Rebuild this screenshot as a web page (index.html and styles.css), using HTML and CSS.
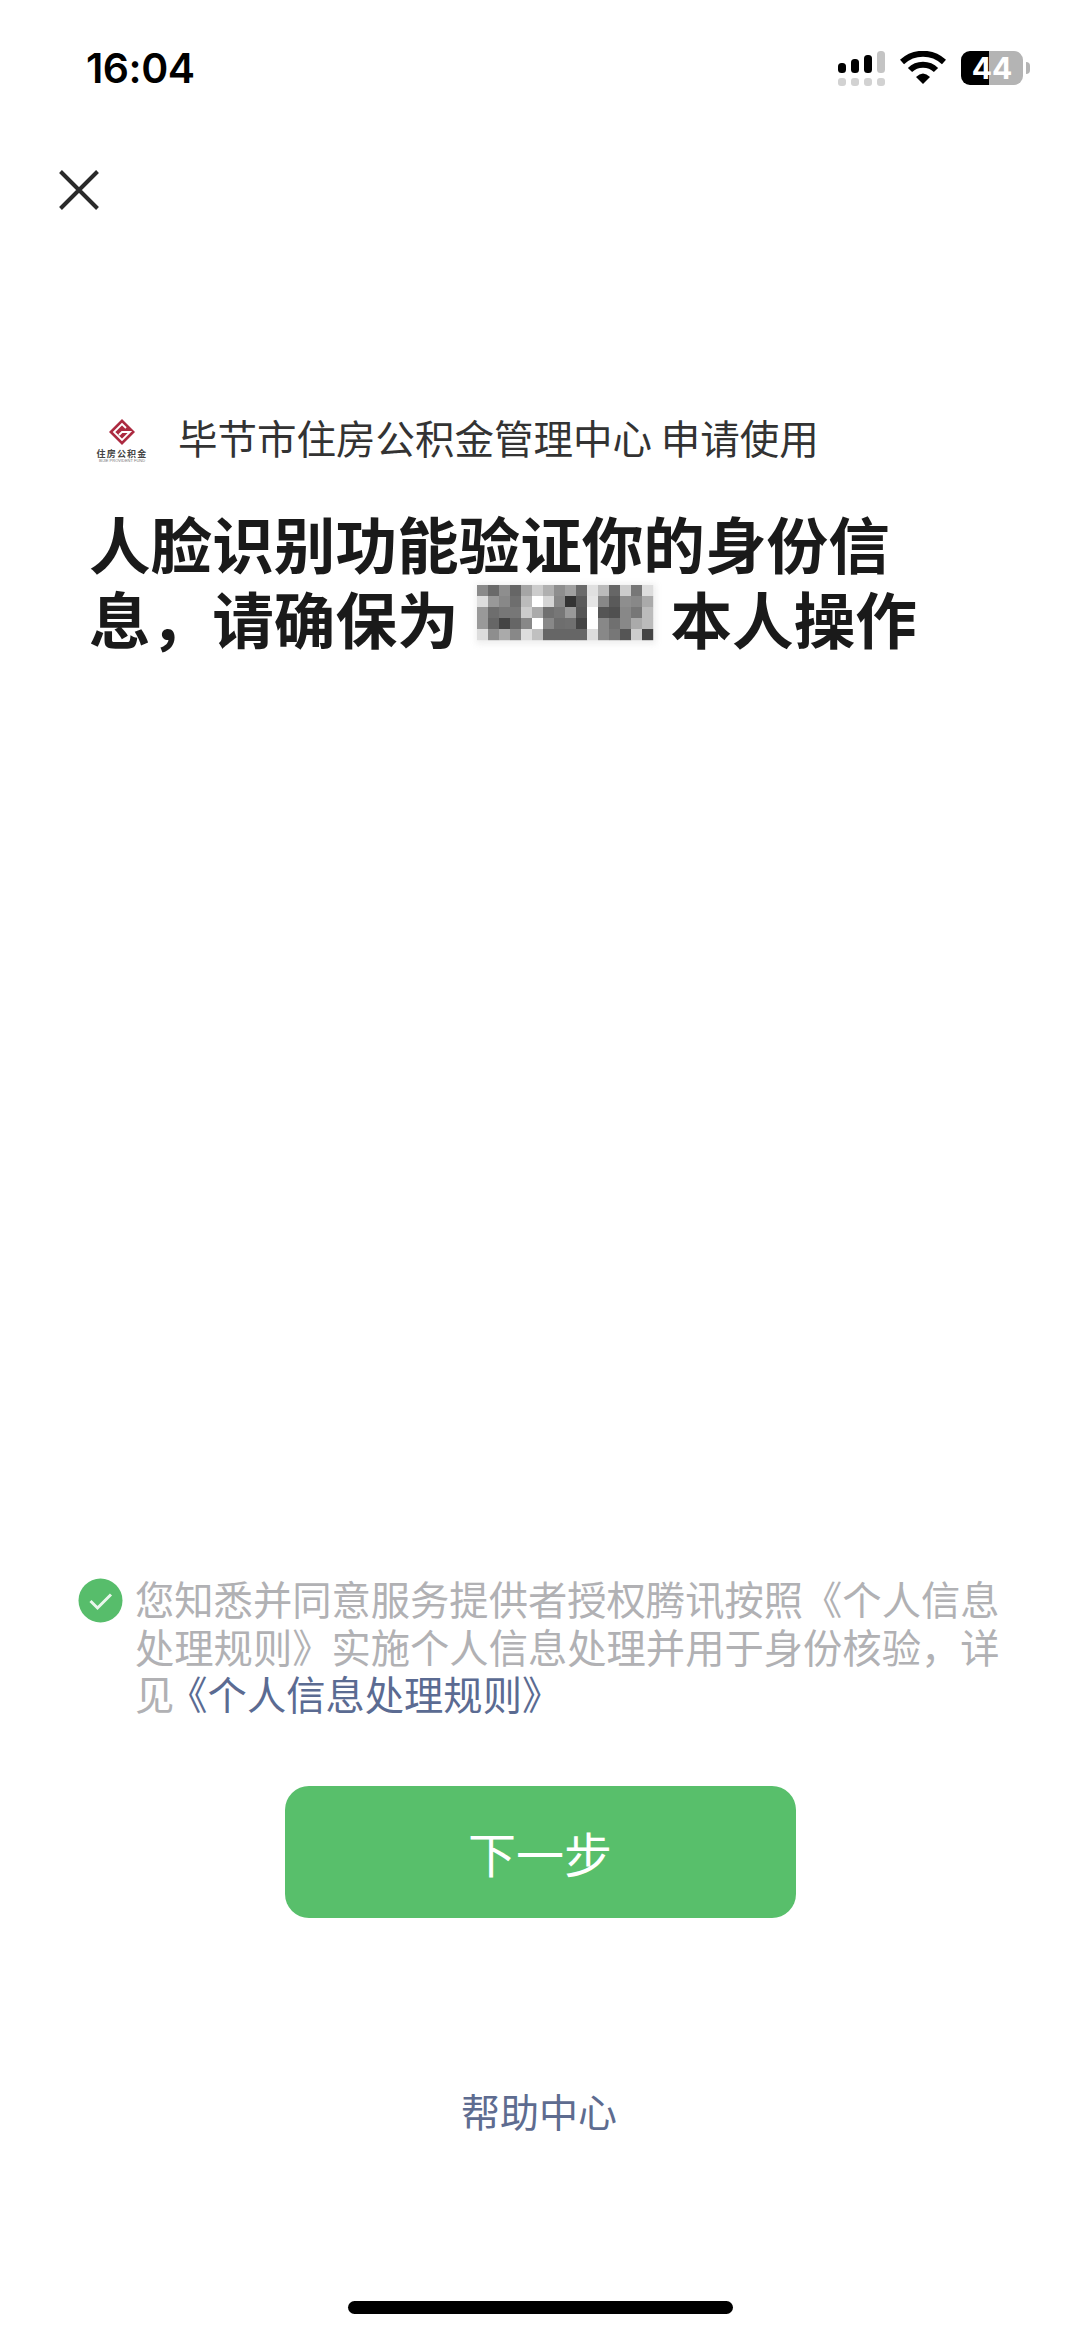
FILE: index.html
```html
<!DOCTYPE html>
<html lang="zh-CN">
<head>
  <meta charset="UTF-8">
  <meta name="viewport" content="width=device-width, initial-scale=1.0">
  <title>人脸识别</title>
  <link rel="stylesheet" href="styles.css">
</head>
<body>
  <div class="page">
    <!-- Status bar -->
    <header class="status-bar">
      <span class="time">16:04</span>
      <div class="status-icons">
        <svg class="signal" width="48" height="36" viewBox="0 0 48 36">
          <rect x="0" y="12" width="8" height="10" rx="3.5" fill="#000"/>
          <rect x="13" y="8" width="8" height="14" rx="3.5" fill="#000"/>
          <rect x="26" y="4" width="8" height="18" rx="3.5" fill="#000"/>
          <rect x="39" y="0" width="8" height="22" rx="3.5" fill="#c4c4c4"/>
          <rect x="0" y="27" width="8" height="8" rx="3" fill="#d2d2d2"/>
          <rect x="13" y="27" width="8" height="8" rx="3" fill="#d2d2d2"/>
          <rect x="26" y="27" width="8" height="8" rx="3" fill="#d2d2d2"/>
          <rect x="39" y="27" width="8" height="8" rx="3" fill="#d2d2d2"/>
        </svg>
        <svg class="wifi" width="46" height="34" viewBox="0 0 46 34">
          <path d="M2 11 C14 0 32 0 44 11" fill="none" stroke="#000" stroke-width="6"/>
          <path d="M10 19 C17 12 29 12 36 19" fill="none" stroke="#000" stroke-width="6"/>
          <path d="M16 26 Q23 19 30 26 L23 33 Z" fill="#000"/>
        </svg>
        <div class="battery">
          <div class="battery-body"><span>44</span></div>
          <div class="battery-tip"></div>
        </div>
      </div>
    </header>

    <button class="close-btn">
      <svg width="40" height="40" viewBox="0 0 40 40">
        <path d="M1.5 1.5 L38.5 38.5 M38.5 1.5 L1.5 38.5" stroke="#2a2a2a" stroke-width="4" fill="none"/>
      </svg>
    </button>

    <!-- Who is asking -->
    <div class="app-row">
      <div class="app-logo">
        <svg width="28" height="28" viewBox="0 0 28 28">
          <path d="M14 1 L27 14 L14 27 L1 14 Z" fill="#ac2a40"/>
          <path d="M18 10 L14 6 L6 14 L14 22 L22 14 L14 14 L11 17" fill="none" stroke="#fff" stroke-width="1.8"/>
        </svg>
        <span class="logo-name">住房公积金</span>
        <span class="logo-sub">BIJIE PROVIDENT FUND</span>
      </div>
      <span class="app-name">毕节市住房公积金管理中心&nbsp;申请使用</span>
    </div>

    <h1 class="title">人脸识别功能验证你的身份信<br>息，请确保为 <svg class="mosaic" id="mosaic" width="190" height="72" viewBox="0 0 190 72"></svg> 本人操作</h1>

    <div class="spacer"></div>

    <!-- Consent -->
    <div class="consent">
      <svg class="check" width="45" height="45" viewBox="0 0 45 45">
        <circle cx="22.5" cy="22.5" r="22" fill="#57bd6b"/>
        <path d="M12.5 23 L19.5 30 L33 16.5" fill="none" stroke="#e9f7ec" stroke-width="3"/>
      </svg>
      <p>您知悉并同意服务提供者授权腾讯按照《个人信息<br>处理规则》实施个人信息处理并用于身份核验，详<br>见<a class="link">《个人信息处理规则》</a></p>
    </div>

    <button class="next-btn">下一步</button>
    <a class="help">帮助中心</a>
    <div class="home-indicator"></div>
  </div>

  <script>
    // pixelated name, grey value per cell
    const cells = [
      [0x8a,0x6a,0x8e,0x66,0xa5,0xcc,0xb0,0x8e,0xa0,0x6a,0xe0,0xbb,0x66,0xcc,0x77,0xdd],
      [0xdd,0x99,0x88,0x6e,0xbb,0xff,0xd5,0x88,0x33,0x5a,0xe5,0x88,0x5a,0x8e,0x88,0xaa],
      [0x99,0x6e,0x77,0x77,0xcc,0xaa,0x70,0x77,0x99,0x55,0xff,0x55,0x50,0x88,0x77,0xbb],
      [0x99,0x66,0x44,0x66,0x88,0xff,0x88,0x6e,0x70,0x44,0xff,0x88,0x70,0x88,0xaa,0xbb],
      [0xdd,0x8e,0xaa,0x88,0xdd,0xc0,0x66,0x66,0x66,0x66,0xdd,0x88,0x77,0x55,0xcc,0x44]
    ];
    const mosaic = document.getElementById("mosaic");
    let out = '<rect class="halo" x="4" y="6" width="180" height="60" fill="#eeeeee"/>';
    cells.forEach((row, r) => {
      row.forEach((v, c) => {
        out += `<rect x="${5 + c * 11}" y="${7 + r * 11}" width="11.2" height="11.2" fill="rgb(${v},${v},${v})"/>`;
      });
    });
    mosaic.innerHTML = out;
  </script>
</body>
</html>
```
FILE: styles.css
```css
* {
  margin: 0;
  padding: 0;
  box-sizing: border-box;
}

body {
  background: #fff;
  font-family: "Noto Sans CJK SC", "Noto Sans", sans-serif;
}

.page {
  width: 1080px;
  height: 2337px;
  display: flex;
  flex-direction: column;
  overflow: hidden;
}

/* Status bar */
.status-bar {
  display: flex;
  justify-content: space-between;
  align-items: center;
  height: 68px;
  margin-top: 34px;
  padding: 0 50px 0 86px;
}

.time {
  font-family: Inter, sans-serif;
  font-weight: 600;
  font-size: 41px;
  letter-spacing: -0.5px;
  color: #000;
}

.status-icons {
  display: flex;
  align-items: center;
  gap: 15px;
}

.signal {
  display: block;
  margin: 1px -1px 0 0;
}

.wifi {
  display: block;
}

.battery {
  display: flex;
  align-items: center;
  gap: 3px;
}

.battery-body {
  width: 62px;
  height: 34px;
  border-radius: 9px;
  background: linear-gradient(90deg, #000 45%, #b4b4b4 45%);
  text-align: center;
  color: #fff;
  font-family: Inter, sans-serif;
  font-weight: 700;
  font-size: 30px;
  line-height: 34px;
}

.battery-tip {
  width: 4px;
  height: 12px;
  border-radius: 0 4px 4px 0;
  background: #b4b4b4;
}

.close-btn {
  align-self: flex-start;
  background: none;
  border: none;
  margin: 68px 0 0 59px;
  width: 40px;
  height: 40px;
}

.close-btn svg {
  display: block;
}

/* App row */
.app-row {
  display: flex;
  align-items: center;
  margin: 202px 0 0 96px;
}

.app-logo {
  width: 52px;
  height: 44px;
  margin: 6px 30px 0 0;
  display: flex;
  flex-direction: column;
  align-items: center;
}

.app-logo svg {
  display: block;
  flex: none;
}

.logo-name {
  font-weight: 700;
  font-size: 9px;
  letter-spacing: 1.2px;
  line-height: 11px;
  margin-top: 2px;
  white-space: nowrap;
  color: #444;
}

.logo-sub {
  font-family: "Liberation Sans", sans-serif;
  font-size: 4px;
  line-height: 4px;
  white-space: nowrap;
  color: #777;
}

.app-name {
  font-size: 39.5px;
  line-height: 50px;
  color: #333;
}

/* Heading */
.title {
  margin: 43px 0 0 89px;
  font-size: 61.6px;
  font-weight: 700;
  line-height: 75px;
  white-space: nowrap;
  color: #1a1a1a;
}

.mosaic {
  vertical-align: 24px;
  margin: -30px -5px -30px -1px;
  overflow: visible;
  filter: blur(0.6px);
}

.halo {
  filter: blur(3px);
}

.spacer {
  flex: 1;
}

/* Consent */
.consent {
  display: flex;
  align-items: flex-start;
  padding: 0 70px 0 78px;
}

.check {
  flex: none;
  display: block;
  margin: 4px 12px 0 0;
}

.consent p {
  font-size: 39.3px;
  line-height: 47.6px;
  white-space: nowrap;
  color: #b1b1b4;
}

.link {
  margin-left: -6px;
  color: #5b6b92;
}

.next-btn {
  align-self: center;
  width: 511px;
  height: 132px;
  margin-top: 69px;
  border: none;
  border-radius: 24px;
  background: #58bf6b;
  color: #fff;
  font-family: "Noto Sans CJK SC", sans-serif;
  font-weight: 400;
  font-size: 48px;
}

.help {
  align-self: center;
  margin: 163px 0 0 -2px;
  font-size: 39px;
  line-height: 58px;
  color: #5e6c90;
}

.home-indicator {
  align-self: center;
  width: 385px;
  height: 13px;
  margin: 162px 0 23px;
  border-radius: 7px;
  background: #000;
}
```
